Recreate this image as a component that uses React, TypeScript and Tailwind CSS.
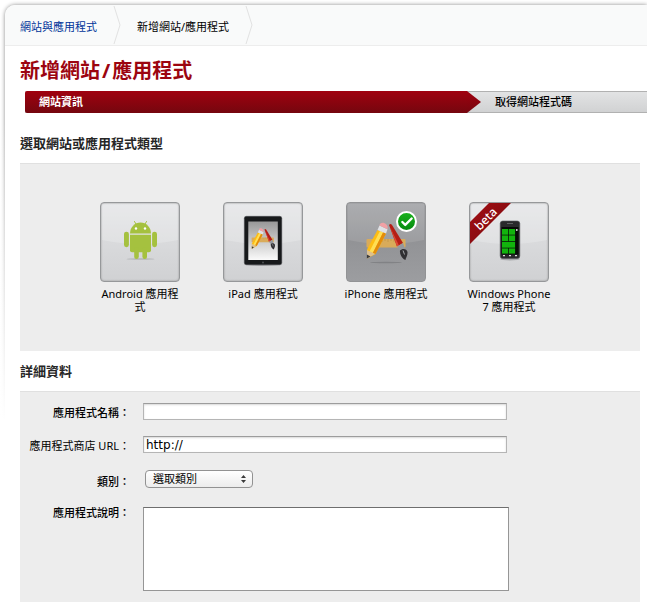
import { useState, type ReactNode } from "react";
import clsx from "clsx";
import { Check } from "lucide-react";

const AndroidIcon = () => (
  <svg viewBox="0 0 78 78" className="size-full" aria-hidden="true">
    <ellipse cx="39.500" cy="56" rx="14" ry="0.800" fill="#b4b5b7" />
    <g fill="#a5c13f">
      <path d="M29 30.500a10.500 11 0 0 1 21 0z" />
      <path d="M29 31.700h21v15.500a2 2 0 0 1-2 2h-17a2 2 0 0 1-2-2z" />
      <rect x="23" y="28.700" width="4.900" height="15.500" rx="2.400" />
      <rect x="51.100" y="28.700" width="4.900" height="15.500" rx="2.400" />
      <rect x="33.200" y="44.500" width="4.600" height="11.500" rx="2.200" />
      <rect x="41.400" y="44.500" width="4.600" height="11.500" rx="2.200" />
    </g>
    <path d="M35.500 22l-2-3.500M43.500 22l2-3.500" stroke="#a5c13f" strokeWidth="1" strokeLinecap="round" />
    <circle cx="35" cy="25.500" r="1.200" fill="#fff" />
    <circle cx="44" cy="25.500" r="1.200" fill="#fff" />
  </svg>
);

const ArtTools = () => (
  <>
    <rect x="19.500" y="36" width="39" height="8.500" rx="1" fill="#d9ab5a" />
    <path d="M29 36v3M32 36v2M35 36v3M38 36v2M41 36v3M44 36v2M47 36v3" stroke="#b98f45" strokeWidth="0.600" />
    {/* pencil */}
    <path d="M30.500 27L39 30.500 28.500 51 20 55.500 20 46.500z" fill="#fdbd14" />
    <path d="M33 28L36.200 29.300 25.800 50 22.500 48.500z" fill="#ffdf55" />
    <path d="M36.200 29.300L39 30.500 28.500 51 25.800 50z" fill="#e38c0c" />
    <path d="M20 47L28 51 20 55.500z" fill="#dcc08f" />
    <path d="M19.900 51.500L23.500 53.500 19.900 55.500z" fill="#3a3a3c" />
    <path d="M30.500 27L32.500 22.500 40.500 26.300 39 30.500z" fill="#e0e2e6" />
    <path d="M32.500 22.500C33 17.500 42 20 40.500 26.300z" fill="#f1a1a5" />
    {/* brush */}
    <path d="M42 22c1-1.500 2-1.500 3 0L56 40 50 43.500z" fill="#b51d16" />
    <path d="M43 24L50 43.500 52 42.500z" fill="#dd4a35" />
    <path d="M50 43.500L56 40 58 46 53.500 48z" fill="#94989e" />
    <path d="M53 47.500C55 45 60 45.500 60.500 49c.3 4-2 6-2 8-3-1-6-5-5.500-9.500z" fill="#302f32" />
    <path d="M56 47.500l1.500 4" stroke="#a5a7aa" strokeWidth="1" />
  </>
);

const IpadIcon = () => (
  <svg viewBox="0 0 78 78" className="size-full" aria-hidden="true">
    <defs>
      <linearGradient id="ipadScreen" x1="0" y1="0" x2="0" y2="1">
        <stop offset="0" stopColor="#989898" />
        <stop offset="1" stopColor="#fafafa" />
      </linearGradient>
    </defs>
    <ellipse cx="39" cy="61.500" rx="17" ry="1.500" fill="#a9aaac" />
    <rect x="20.300" y="13.300" width="37.500" height="48.500" rx="2" fill="#17191b" stroke="#4a4d50" strokeWidth="0.500" />
    <rect x="24.300" y="18.500" width="29.500" height="38.500" fill="url(#ipadScreen)" />
    <g transform="translate(16.500 14) scale(0.570)">
      <ArtTools />
    </g>
    <circle cx="39" cy="59.400" r="1" fill="#4a4d50" />
  </svg>
);

const IphoneIcon = () => (
  <svg viewBox="0 0 78 78" className="size-full" aria-hidden="true">
    <ellipse cx="39" cy="59.500" rx="16" ry="0.800" fill="#818285" />
    <ArtTools />
  </svg>
);

const WindowsPhoneIcon = () => (
  <svg viewBox="0 0 78 78" className="size-full" aria-hidden="true">
    <ellipse cx="40" cy="56" rx="10" ry="1.500" fill="#a9aaac" />
    <rect x="30.200" y="18" width="19.600" height="37.500" rx="2.500" fill="#29292b" stroke="#56575a" strokeWidth="0.600" />
    <rect x="31.500" y="24" width="17" height="27.500" fill="#080a08" />
    <path d="M37 20.500h6" stroke="#77787b" strokeWidth="0.700" />
    <g fill="#12b30d">
      <rect x="32" y="26" width="6.200" height="5.700" />
      <rect x="38.900" y="26" width="6.200" height="5.700" />
      <rect x="32" y="32.400" width="6.200" height="5.700" />
      <rect x="38.900" y="32.400" width="6.200" height="5.700" />
      <rect x="32" y="38.800" width="13.100" height="5.900" />
      <rect x="32" y="45.400" width="6.200" height="5.200" />
      <rect x="38.900" y="45.400" width="6.200" height="5.200" />
    </g>
    <path d="M33 52.700h2M39 52.700h2M45 52.700h2" stroke="#dedede" strokeWidth="1.200" />
    <circle cx="46.800" cy="27" r="0.900" fill="#eee" />
  </svg>
);

const BetaRibbon = () => (
  <svg viewBox="0 0 42 42" className="absolute top-0 left-0 size-[42px]">
    <defs>
      <linearGradient id="ribbon" x1="0" y1="0" x2="1" y2="1">
        <stop offset="0" stopColor="#a30d12" />
        <stop offset="1" stopColor="#760b10" />
      </linearGradient>
    </defs>
    <path d="M19 0H41L0 41V19z" fill="url(#ribbon)" />
    <text
      x="16"
      y="20"
      transform="rotate(-45 16 16)"
      textAnchor="middle"
      fill="#fff"
      className="font-['Noto_Sans',sans-serif] text-[12px] font-medium"
    >
      beta
    </text>
  </svg>
);

type AppType = { id: string; label: string; icon: ReactNode; beta?: boolean };

const appTypes: AppType[] = [
  { id: "android", label: "Android 應用程式", icon: <AndroidIcon /> },
  { id: "ipad", label: "iPad 應用程式", icon: <IpadIcon /> },
  { id: "iphone", label: "iPhone 應用程式", icon: <IphoneIcon /> },
  { id: "wp7", label: "Windows Phone 7 應用程式", icon: <WindowsPhoneIcon />, beta: true },
];

type TypeTileProps = { type: AppType; selected: boolean; onSelect: () => void };

const TypeTile = ({ type, selected, onSelect }: TypeTileProps) => (
  <button
    type="button"
    aria-pressed={selected}
    onClick={onSelect}
    className="flex w-[86px] cursor-pointer flex-col items-center"
  >
    <span
      className={clsx(
        "relative block size-20 rounded-[4px] border",
        selected
          ? "border-[#929395] bg-linear-to-b from-[#a3a4a7] via-[#929396] to-[#9c9da0]"
          : "border-[#96989a] bg-linear-to-b from-[#e3e4e6] via-[#d9dadc] to-[#d0d1d3] shadow-[inset_0_0_2px_#8c8c8c]"
      )}
    >
      <svg viewBox="0 0 78 78" className="absolute inset-0 size-full" aria-hidden="true">
        <path d="M1 1h76v36Q39 45 1 37z" fill="#fff" opacity={selected ? 0.1 : 0.2} />
      </svg>
      <span className="relative block size-full">{type.icon}</span>
      {type.beta && <BetaRibbon />}
      {selected && (
        <span className="absolute top-2 right-2 flex size-[21px] items-center justify-center rounded-full border-2 border-white bg-linear-to-b from-[#18b01c] to-[#078b10] text-white">
          <Check className="size-[14px]" strokeWidth={4} />
        </span>
      )}
    </span>
    <span className="mt-[5px] text-[11px] leading-[13px]">{type.label}</span>
  </button>
);

const Separator = () => (
  <svg viewBox="0 0 8 40" className="h-10 w-2" fill="none" stroke="#e2e2e2" aria-hidden="true">
    <path d="M1 1L7 20 1 39" />
  </svg>
);

const SectionTitle = ({ children }: { children: ReactNode }) => (
  <h2 className="text-[13px] leading-5 font-bold text-[#262626]">{children}</h2>
);

type FieldProps = { id: string; label: string; bold?: boolean; children: ReactNode };

const Field = ({ id, label, bold = true, children }: FieldProps) => (
  <div className="flex items-start">
    <label
      htmlFor={id}
      className={clsx("w-[110px] shrink-0 text-right text-[11px] leading-5", bold && "font-medium")}
    >
      {label}
    </label>
    <div className="flex grow pl-[13px]">{children}</div>
  </div>
);

const inputClass =
  "h-[17px] w-[364px] border border-[#b5b5b5] border-t-[#9c9c9c] bg-white px-[2px] font-['DejaVu_Sans',sans-serif] text-[12px] leading-[15px] shadow-[inset_0_1px_2px_#d8d8d8]";

export default function App() {
  const [selected, setSelected] = useState("iphone");
  const [name, setName] = useState("");
  const [url, setUrl] = useState("http://");

  return (
    <div className="relative flex min-h-screen overflow-hidden bg-white pt-[5px] pl-[5px] font-['Noto_Sans','Noto_Sans_CJK_TC',sans-serif] text-black">
      <div className="flex grow flex-col rounded-tl-[10px] bg-white shadow-[0_0_4px_#8c8c8c]">
        <nav className="flex h-[41px] items-center rounded-tl-[10px] border-b border-[#ededed] bg-[#f9fafa] pl-[15px] text-[11px]">
          <a href="#" className="mr-4 pt-1 text-[#003399]">
            網站與應用程式
          </a>
          <Separator />
          <span className="mr-4 ml-4 pt-1">新增網站/應用程式</span>
          <Separator />
        </nav>

        <main className="flex grow flex-col pl-[15px]">
          <h1 className="mt-[9px] text-[20px] leading-8 font-bold text-[#9c0510]">
            新增網站<span className="mx-[2px]">/</span>應用程式
          </h1>

          <ol className="mt-1 ml-[5px] flex h-[22px] bg-linear-to-b from-[#e3e4e5] to-[#d0d1d2] text-[11px] leading-[22px]">
            <li className="flex grow">
              <span className="grow rounded-l-[2px] bg-linear-to-b from-[#a0000f] to-[#75060e] pl-[14px] font-bold text-white">
                網站資訊
              </span>
              <svg viewBox="0 0 14 22" className="h-[22px] w-[14px]" aria-hidden="true">
                <defs>
                  <linearGradient id="arrow" x1="0" y1="0" x2="0" y2="1">
                    <stop offset="0" stopColor="#a0000f" />
                    <stop offset="1" stopColor="#75060e" />
                  </linearGradient>
                </defs>
                <path d="M0 0.500h14M0 21.500h14" stroke="#b1b1b1" />
                <path d="M0 0L14 11 0 22z" fill="url(#arrow)" />
              </svg>
            </li>
            <li className="w-[166px] border-y border-[#b1b1b1] pl-[14px] leading-5 font-medium">取得網站程式碼</li>
          </ol>

          <section className="mt-5 mr-[7px]">
            <SectionTitle>選取網站或應用程式類型</SectionTitle>
            <div className="mt-[10px] flex h-[188px] items-start gap-[37px] border-t border-[#e0e0e0] bg-[#ededed] pt-[38px] pl-[77px]">
              {appTypes.map((type) => (
                <TypeTile
                  key={type.id}
                  type={type}
                  selected={selected === type.id}
                  onSelect={() => setSelected(type.id)}
                />
              ))}
            </div>
          </section>

          <section className="mt-[10px] mr-[7px] flex grow flex-col">
            <SectionTitle>詳細資料</SectionTitle>
            <form className="mt-[10px] grow border-t border-[#e0e0e0] bg-[#ededed] pt-[11px] pb-[11px]">
              <div className="flex flex-col gap-[13px]">
                <Field id="name" label="應用程式名稱：">
                  <input id="name" value={name} onChange={(e) => setName(e.target.value)} className={inputClass} />
                </Field>
                <Field id="url" label="應用程式商店 URL：" bold={false}>
                  <input id="url" value={url} onChange={(e) => setUrl(e.target.value)} className={inputClass} />
                </Field>
              </div>
              <div className="mt-4 flex flex-col gap-[11px]">
                <Field id="category" label="類別：">
                  <div className="relative -mt-[2px] ml-[2px]">
                    <select
                      id="category"
                      className="block h-[18px] w-[108px] appearance-none rounded-[4px] border border-[#929292] bg-linear-to-b from-white to-[#ececec] pl-[7px] text-[11px] leading-4"
                    >
                      <option>選取類別</option>
                    </select>
                    <svg
                      viewBox="0 0 5 8"
                      className="pointer-events-none absolute top-[5px] right-[7px] h-2 w-[5px]"
                      fill="#3a3a3a"
                      aria-hidden="true"
                    >
                      <path d="M2.500 0L5 3H0zM2.500 8L5 5H0z" />
                    </svg>
                  </div>
                </Field>
                <Field id="description" label="應用程式說明：">
                  <textarea
                    id="description"
                    className="mt-1 h-[84px] w-[366px] resize-none border border-[#969696] border-t-[#6e6e6e] bg-white px-[2px] text-[11px]"
                  />
                </Field>
              </div>
            </form>
          </section>
        </main>
      </div>
      {/* side shadow dies away down the page */}
      <div className="pointer-events-none absolute top-0 bottom-0 left-0 w-[5px] bg-linear-to-b from-transparent from-20% to-white to-70%" />
    </div>
  );
}
